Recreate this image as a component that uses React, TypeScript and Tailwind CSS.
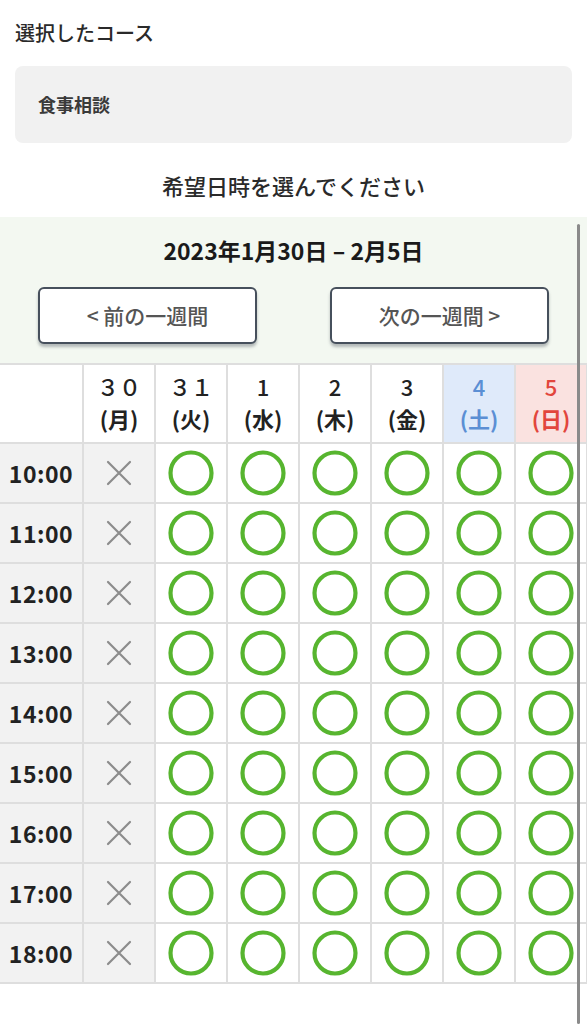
import React from 'react';

const days = [
  { num: '３０', wd: '月', tone: 'plain' },
  { num: '３１', wd: '火', tone: 'plain' },
  { num: '1', wd: '水', tone: 'plain' },
  { num: '2', wd: '木', tone: 'plain' },
  { num: '3', wd: '金', tone: 'plain' },
  { num: '4', wd: '土', tone: 'sat' },
  { num: '5', wd: '日', tone: 'sun' },
];

const times = ['10:00', '11:00', '12:00', '13:00', '14:00', '15:00', '16:00', '17:00', '18:00'];

const headTone: Record<string, string> = {
  plain: 'bg-white text-[#222]',
  sat: 'bg-[#dfeafa] text-[#5b8fd4]',
  sun: 'bg-[#fae2e0] text-[#e2463c]',
};

const Circle = () => (
  <svg width="46" height="46" viewBox="0 0 46 46" className="mx-auto block">
    <circle cx="23" cy="23" r="20.5" fill="none" stroke="#57b52f" strokeWidth="4.2" />
  </svg>
);

const Cross = () => (
  <svg width="26" height="26" viewBox="0 0 26 26" className="mx-auto block">
    <path d="M2 2 L24 24 M24 2 L2 24" stroke="#8c8c8c" strokeWidth="2.2" strokeLinecap="round" />
  </svg>
);

export default function App() {
  return (
    <div className="relative min-h-[1024px] bg-white font-['Noto_Sans_CJK_JP','Noto_Sans',sans-serif] text-[#2a2a2a]">
      <div className="px-[15px] pt-[19px]">
        <h2 className="text-[20px] leading-[28px] font-medium">選択したコース</h2>
        <div className="mt-[19px] flex h-[77px] items-center rounded-lg bg-[#f1f1f1] px-[23px] text-[18px] font-bold text-[#3a3a3a]">
          食事相談
        </div>
      </div>

      <p className="mt-[28px] mb-[18px] text-center text-[22px] leading-[28px] font-medium">希望日時を選んでください</p>

      <section className="bg-[#f3f8f1] pt-[19px] pb-[19px]">
        <h3 className="text-center text-[23px] leading-[28px] font-bold text-[#1a1a1a]">2023年1月30日 – 2月5日</h3>
        <div className="mt-[23px] flex justify-between px-[38px]">
          <button className="h-[57px] w-[219px] rounded-md border-2 border-[#46505c] bg-white text-[21px] font-medium text-[#555] shadow-[0_3px_3px_rgba(60,70,80,0.35)]">
            &lt; 前の一週間
          </button>
          <button className="h-[57px] w-[219px] rounded-md border-2 border-[#46505c] bg-white text-[21px] font-medium text-[#555] shadow-[0_3px_3px_rgba(60,70,80,0.35)]">
            次の一週間 &gt;
          </button>
        </div>
      </section>

      <table className="w-[587px] table-fixed border-collapse">
        <colgroup>
          <col className="w-[83px]" />
          {days.map((d) => (
            <col key={d.wd} className="w-[72px]" />
          ))}
        </colgroup>
        <thead>
          <tr className="h-[79px]">
            <th className="border-2 border-l-0 border-[#dedede] bg-white" />
            {days.map((d) => (
              <th
                key={d.wd}
                className={`border-2 border-[#dedede] pb-[4px] text-[22px] leading-[32px] font-bold ${headTone[d.tone]}`}
              >
                <div className="font-medium">{d.num}</div>
                <div>({d.wd})</div>
              </th>
            ))}
          </tr>
        </thead>
        <tbody>
          {times.map((t) => (
            <tr key={t} className="h-[60px]">
              <td className="border-2 border-l-0 border-[#dedede] bg-[#f2f2f2] text-center text-[23px] font-bold tracking-[0.5px] text-[#222]">
                {t}
              </td>
              {days.map((d, i) => (
                <td
                  key={d.wd}
                  className={`border-2 border-[#dedede] ${i === 0 ? 'bg-[#f2f2f2]' : 'bg-white'}`}
                >
                  {i === 0 ? <Cross /> : <Circle />}
                </td>
              ))}
            </tr>
          ))}
        </tbody>
      </table>

      <div className="absolute top-[224px] bottom-0 right-[7px] w-[3px] rounded-full bg-[#8a8a8a]" />
    </div>
  );
}
